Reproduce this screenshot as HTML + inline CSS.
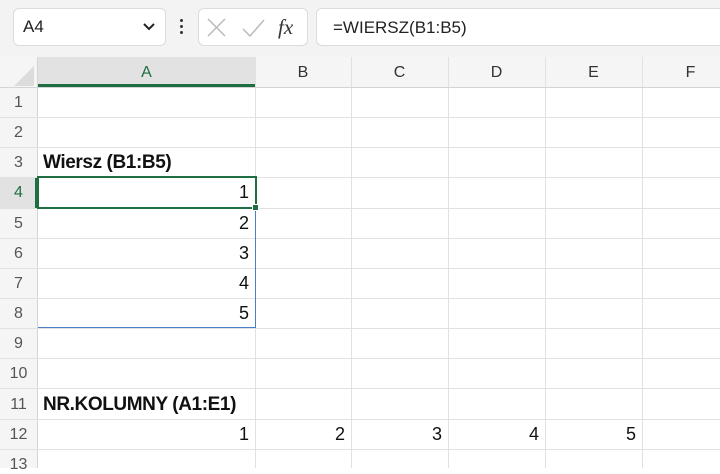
<!DOCTYPE html>
<html><head><style>
*{margin:0;padding:0;box-sizing:border-box}
body{width:720px;height:468px;overflow:hidden;background:#fff;font-family:"Liberation Sans",sans-serif;position:relative}
.abs{position:absolute}
.top{left:0;top:0;width:720px;height:57px;background:#f3f3f3}
.box{background:#fff;border:1px solid #dcdcdc;border-radius:6px}
.hl{background:#e2e2e2}
.vl{position:absolute;width:1px;background:#e1e1e1;top:57px;height:411px}
.hr{position:absolute;height:1px;background:#e1e1e1;left:0;width:720px}
.ch{position:absolute;top:57px;height:30px;line-height:31px;text-align:center;font-size:16px;color:#333}
.rh{position:absolute;left:0;width:37px;text-align:center;font-size:16px;color:#555}
.c{position:absolute;font-family:"Liberation Sans",sans-serif;font-size:18px;color:#111}
.b{font-weight:bold;font-size:19px;letter-spacing:-0.4px}
</style></head><body>
<div class="abs top"></div>
<div class="abs box" style="left:13px;top:8px;width:153px;height:38px"></div>
<div class="abs" style="left:23px;top:17px;font-size:17px;color:#222">A4</div>
<svg class="abs" style="left:143px;top:23px" width="12" height="8"><path d="M1 1 L6 6 L11 1" stroke="#222" stroke-width="2" fill="none"/></svg>
<div class="abs" style="left:180px;top:19px;width:3px;height:3px;background:#333;border-radius:50%"></div>
<div class="abs" style="left:180px;top:25px;width:3px;height:3px;background:#333;border-radius:50%"></div>
<div class="abs" style="left:180px;top:31px;width:3px;height:3px;background:#333;border-radius:50%"></div>
<div class="abs box" style="left:198px;top:8px;width:110px;height:38px"></div>
<svg class="abs" style="left:206px;top:16px" width="100" height="24">
<path d="M2 3 L19 20 M19 3 L2 20" stroke="#bbb" stroke-width="1.5"/>
<path d="M37 13 L44 20 L58 4" stroke="#bbb" stroke-width="1.5" fill="none"/>
<text x="72" y="18" font-family="Liberation Serif" font-style="italic" font-size="21" fill="#333">fx</text>
</svg>
<div class="abs box" style="left:316px;top:8px;width:420px;height:38px"></div>
<div class="abs" style="left:333px;top:18px;font-size:17px;color:#222">=WIERSZ(B1:B5)</div>

<div class="abs" style="left:0;top:57px;width:720px;height:30px;background:#f5f5f5"></div>
<div class="abs" style="left:0;top:57px;width:37px;height:411px;background:#f5f5f5"></div>
<svg class="abs" style="left:14px;top:66px" width="20" height="20"><path d="M20 0 L20 20 L0 20Z" fill="#dcdcdc"/></svg>
<div class="abs hl" style="left:38px;top:57px;width:217px;height:30px"></div>
<div class="abs" style="left:38px;top:84px;width:217px;height:3px;background:#1e6e42"></div>
<div class="abs hl" style="left:0;top:178px;width:37px;height:30px"></div>
<div class="abs" style="left:35px;top:178px;width:2px;height:30px;background:#1e6e42"></div>

<div class="vl" style="left:37px;background:#d4d4d4"></div>
<div class="vl" style="left:255px"></div>
<div class="vl" style="left:351px"></div>
<div class="vl" style="left:448px"></div>
<div class="vl" style="left:545px"></div>
<div class="vl" style="left:642px"></div>

<div class="hr" style="top:87px;background:#d4d4d4"></div>
<div class="hr" style="top:117px"></div>
<div class="hr" style="top:147px"></div>
<div class="hr" style="top:177px"></div>
<div class="hr" style="top:208px"></div>
<div class="hr" style="top:238px"></div>
<div class="hr" style="top:268px"></div>
<div class="hr" style="top:298px"></div>
<div class="hr" style="top:328px"></div>
<div class="hr" style="top:358px"></div>
<div class="hr" style="top:388px"></div>
<div class="hr" style="top:419px"></div>
<div class="hr" style="top:449px"></div>

<div class="ch" style="left:38px;width:217px;color:#1e6e42">A</div>
<div class="ch" style="left:255px;width:96px">B</div>
<div class="ch" style="left:351px;width:97px">C</div>
<div class="ch" style="left:448px;width:97px">D</div>
<div class="ch" style="left:545px;width:97px">E</div>
<div class="ch" style="left:642px;width:97px">F</div>

<div class="rh" style="top:94px">1</div>
<div class="rh" style="top:124px">2</div>
<div class="rh" style="top:154px">3</div>
<div class="rh" style="top:184px;color:#1e6e42">4</div>
<div class="rh" style="top:215px">5</div>
<div class="rh" style="top:245px">6</div>
<div class="rh" style="top:275px">7</div>
<div class="rh" style="top:305px">8</div>
<div class="rh" style="top:335px">9</div>
<div class="rh" style="top:365px">10</div>
<div class="rh" style="top:396px">11</div>
<div class="rh" style="top:426px">12</div>
<div class="rh" style="top:456px">13</div>

<div class="abs" style="left:38px;top:208px;width:218px;height:120px;border-right:1px solid #4a7ec8;border-bottom:1px solid #4a7ec8"></div>
<div class="abs" style="left:37px;top:176px;width:220px;height:33px;border:2px solid #1e6e42"></div>
<div class="abs" style="left:252px;top:204px;width:7px;height:7px;background:#1e6e42;border:1px solid #fff"></div>

<div class="c b" style="left:43px;top:152px">Wiersz (B1:B5)</div>
<div class="c" style="left:239px;top:182px">1</div>
<div class="c" style="left:239px;top:213px">2</div>
<div class="c" style="left:239px;top:243px">3</div>
<div class="c" style="left:239px;top:273px">4</div>
<div class="c" style="left:239px;top:303px">5</div>
<div class="c b" style="left:43px;top:394px">NR.KOLUMNY (A1:E1)</div>
<div class="c" style="left:239px;top:424px">1</div>
<div class="c" style="left:335px;top:424px">2</div>
<div class="c" style="left:432px;top:424px">3</div>
<div class="c" style="left:529px;top:424px">4</div>
<div class="c" style="left:626px;top:424px">5</div>
</body></html>
